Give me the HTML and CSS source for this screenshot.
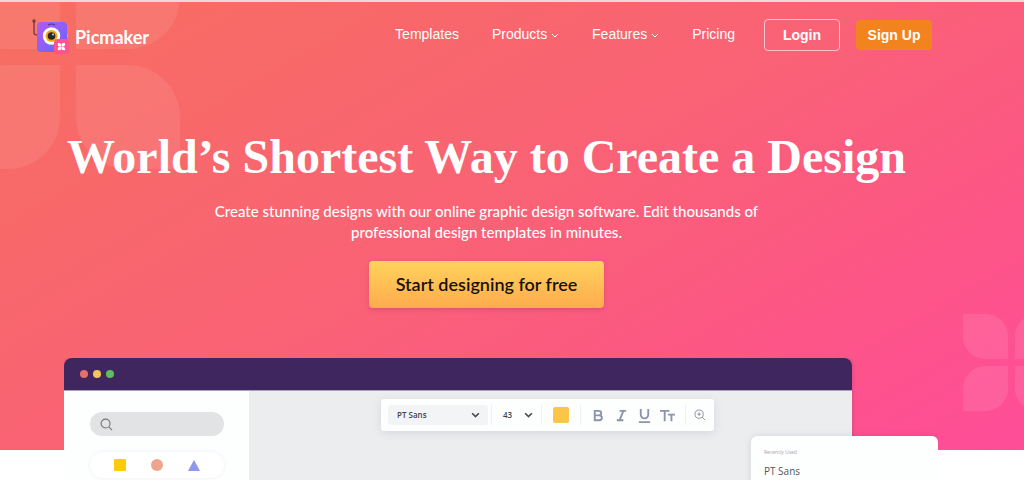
FILE: index.html
```html
<!DOCTYPE html>
<html lang="en">
<head>
<meta charset="utf-8">
<meta name="viewport" content="width=device-width, initial-scale=1">
<title>Picmaker</title>
<link rel="stylesheet" href="styles.css">
</head>
<body>
<svg class="defs" aria-hidden="true">
  <symbol id="flower" viewBox="0 0 224 224">
    <path d="M0 0H52A52 52 0 0 1 104 52V104H52A52 52 0 0 1 0 52Z"/>
    <path d="M224 0H172A52 52 0 0 0 120 52V104H172A52 52 0 0 0 224 52Z"/>
    <path d="M0 224H52A52 52 0 0 0 104 172V120H52A52 52 0 0 0 0 172Z"/>
    <path d="M224 224H172A52 52 0 0 1 120 172V120H172A52 52 0 0 1 224 172Z"/>
  </symbol>
</svg>
<div class="hero">
  <svg class="flower flower-large" aria-hidden="true"><use href="#flower"/></svg>
  <svg class="flower flower-small" aria-hidden="true"><use href="#flower"/></svg>
  <header class="topbar">
    <a class="brand" href="#">
      <svg class="brand-mark" viewBox="0 0 38 36" aria-hidden="true">
        <defs><linearGradient id="body" x2="1" y2="1"><stop stop-color="#b05cf0"/><stop offset="1" stop-color="#6a62ff"/></linearGradient></defs>
        <path d="M2 4v11q0 2 4 2" fill="none" stroke="#7b3a42" stroke-width="1.4"/>
        <circle cx="2" cy="3" r="1.7" fill="#7b3a42"/>
        <rect x="33" y="15" width="3" height="5" rx="1.5" fill="#f0a33c"/>
        <rect x="5" y="4" width="30" height="30" rx="4" fill="url(#body)"/>
        <path d="M16 7q3.500-2 7 0" fill="none" stroke="#49358e" stroke-width="1.2"/>
        <circle cx="19.500" cy="18" r="8.700" fill="#fff"/>
        <circle cx="19.500" cy="18" r="6" fill="#f5a90f"/>
        <circle cx="19.500" cy="18" r="3.800" fill="#292633"/>
        <circle cx="21" cy="16.500" r="1" fill="#ddd"/>
        <rect x="22" y="21" width="15" height="15" rx="4" fill="#fb548e"/>
        <svg x="25.500" y="25" width="7.500" height="7.500" fill="#fff"><use href="#flower"/></svg>
      </svg>
      <span>Picmaker</span>
    </a>
    <nav class="menu">
      <a href="#">Templates</a>
      <a href="#">Products <svg class="caret" viewBox="0 0 8 6" aria-hidden="true"><path d="M1 1l3 3 3-3"/></svg></a>
      <a href="#">Features <svg class="caret" viewBox="0 0 8 6" aria-hidden="true"><path d="M1 1l3 3 3-3"/></svg></a>
      <a href="#">Pricing</a>
    </nav>
    <a class="btn btn-login" href="#">Login</a>
    <a class="btn btn-signup" href="#">Sign Up</a>
  </header>
  <section class="pitch">
    <h1>World’s Shortest Way to Create a Design</h1>
    <p>Create stunning designs with our online graphic design software. Edit thousands of professional design templates in minutes.</p>
    <button class="cta" type="button">Start designing for free</button>
  </section>
</div>
<main class="showcase">
  <div class="window">
    <div class="titlebar"><i class="dot red"></i><i class="dot yellow"></i><i class="dot green"></i></div>
    <div class="workspace">
      <aside class="side">
        <label class="search">
          <svg viewBox="0 0 14 14" aria-hidden="true"><circle cx="6" cy="6" r="4.800"/><path d="M9.500 9.500L13 13"/></svg>
          <input type="search" aria-label="Search">
        </label>
        <div class="shapes">
          <svg viewBox="0 0 12 12"><rect width="12" height="12" rx="1" fill="#ffcb05"/></svg>
          <svg viewBox="0 0 12 12"><circle cx="6" cy="6" r="6" fill="#eda58b"/></svg>
          <svg viewBox="0 0 12 12"><path d="M6 1l6 11H0z" fill="#8f98ee"/></svg>
        </div>
      </aside>
      <div class="canvas">
        <div class="toolbar">
          <button class="picker font-picker" type="button">PT Sans <svg class="chevron" viewBox="0 0 8 6" aria-hidden="true"><path d="M1 1l3 3 3-3"/></svg></button>
          <button class="picker size-picker" type="button">43 <svg class="chevron" viewBox="0 0 8 6" aria-hidden="true"><path d="M1 1l3 3 3-3"/></svg></button>
          <button class="cell color" type="button" aria-label="Color"><i class="swatch"></i></button>
          <div class="cell styles">
            <button type="button" aria-label="Bold"><svg viewBox="0 0 16 16"><path d="M4 3h4.500a2.300 2.300 0 0 1 0 4.800H4zM4 7.800h5a2.600 2.600 0 0 1 0 5.200H4z"/></svg></button>
            <button type="button" aria-label="Italic"><svg viewBox="0 0 16 16"><path d="M6 3h7M3 13h7M10 3L6 13"/></svg></button>
            <button type="button" aria-label="Underline"><svg viewBox="0 0 16 16"><path d="M4 1v6a4 4 0 0 0 8 0V1M2 15h12"/></svg></button>
            <button type="button" aria-label="Text case"><svg viewBox="0 0 16 16"><path d="M0 3h10M5 3v11M8.500 7H16M12.200 7v7"/></svg></button>
          </div>
          <button class="cell zoom" type="button" aria-label="Zoom in"><svg viewBox="0 0 14 14"><circle cx="6" cy="6" r="4.800"/><path d="M9.500 9.500L13 13M6 4v4M4 6h4"/></svg></button>
        </div>
      </div>
    </div>
  </div>
  <div class="fonts">
    <small>Recently Used</small>
    <span>PT Sans</span>
  </div>
</main>
</body>
</html>
```
FILE: styles.css
```css
* { box-sizing: border-box; }
body {
  margin: 0;
  background: #fff;
  color: #fff;
  font-family: Lato, sans-serif;
}
a { color: inherit; text-decoration: none; }
button { border: 0; padding: 0; background: none; font-family: inherit; }
.defs { position: absolute; width: 0; height: 0; }

.hero {
  position: relative;
  overflow: hidden;
  border-top: 2px solid #eed9d5;
  padding-bottom: 142px;
  background: linear-gradient(150deg, #f76e60 0%, #f96374 45%, #fc5784 72%, #ff4d99 100%);
}
.flower { position: absolute; fill: #fff; }
.flower-large { left: -44px; top: -57px; width: 224px; height: 224px; opacity: 0.08; }
.flower-small { right: -36px; bottom: 39px; width: 97px; height: 97px; opacity: 0.09; }

.topbar {
  position: relative;
  display: flex;
  align-items: center;
  padding: 13px 92px 0 32px;
  font-family: "Liberation Sans", Arial, sans-serif;
  font-size: 14px;
}
.brand {
  display: flex;
  align-items: center;
  gap: 5px;
  margin-right: auto;
  padding-top: 3px;
  font: bold 18px/24px Lato, sans-serif;
}
.brand span { padding-top: 2px; }
.brand-mark { width: 38px; height: 36px; }
.menu { display: flex; gap: 33px; margin-right: 29px; line-height: 18px; }
.menu a { padding-bottom: 2px; }
.caret { width: 8px; height: 6px; fill: none; stroke: #fff; }
.btn {
  width: 76px;
  border-radius: 4px;
  font-weight: bold;
  line-height: 30px;
  text-align: center;
}
.btn-login { border: 1px solid #ffc3d2; margin-right: 16px; }
.btn-signup { background: #f3831f; }

.pitch {
  position: relative;
  display: flex;
  flex-direction: column;
  align-items: center;
  padding: 73px 51px 0 0;
  text-align: center;
}
h1 {
  margin: 0;
  font: bold 48px/60px "Liberation Serif", serif;
}
.pitch p {
  max-width: 560px;
  margin: 14px 0 18px;
  font-size: 15px;
  font-weight: 500;
  line-height: 21px;
}
.cta {
  padding: 0 27px;
  border-radius: 4px;
  background: linear-gradient(#ffd35d, #ffab4d);
  box-shadow: 0 2px 4px #a0285040;
  color: #17130c;
  font-size: 18px;
  font-weight: 600;
  line-height: 47px;
}

.showcase {
  position: relative;
  margin: -92px 86px 0 64px;
  overflow: hidden;
}
.window {
  margin-right: 86px;
  border-radius: 8px 8px 0 0;
  overflow: hidden;
  box-shadow: 0 0 4px #40204040;
}
.titlebar {
  display: flex;
  align-items: center;
  gap: 5px;
  height: 32px;
  padding-left: 16px;
  background: #3f265f;
}
.dot { width: 8px; height: 8px; border-radius: 50%; }
.red { background: #e8706a; }
.yellow { background: #f3c65a; }
.green { background: #5cbf5c; }
.workspace {
  display: flex;
  border-top: 1px solid #aaa0bc;
  background: #ecedef;
}
.side {
  width: 185px;
  padding: 21px 25px 0 26px;
  background: #fdfefe;
}
.search {
  display: flex;
  align-items: center;
  gap: 8px;
  height: 24px;
  padding: 0 10px;
  border-radius: 12px;
  background: #e2e3e5;
}
.search svg { width: 13px; height: 13px; fill: none; stroke: #77777c; stroke-width: 1.2; }
.search input { flex: 1; min-width: 0; border: 0; outline: 0; background: none; }
.shapes {
  display: flex;
  align-items: center;
  justify-content: space-around;
  height: 26px;
  margin: 16px 0 3px;
  padding: 0 12px;
  border-radius: 13px;
  background: #fff;
  box-shadow: 0 0 4px #eff0f8;
}
.shapes svg { width: 12px; height: 12px; }
.canvas { flex: 1; padding: 8px 138px 0 132px; }
.toolbar {
  display: flex;
  align-items: center;
  height: 32px;
  padding: 4px 0 4px 7px;
  border-radius: 3px;
  background: #fdfefe;
  box-shadow: 0 2px 8px #d4d6dc;
}
.picker {
  display: flex;
  align-items: center;
  justify-content: space-between;
  height: 20px;
  color: #45464c;
  font: 600 8px/20px "Open Sans", sans-serif;
}
.chevron { width: 9px; height: 7px; fill: none; stroke: #4a4b52; stroke-width: 1.5; }
.font-picker { width: 100px; padding: 0 8px 0 9px; border-radius: 3px; background: #f3f4f6; }
.size-picker { width: 51px; margin-left: 3px; padding: 0 8px 0 11px; border-left: 1px solid #eff0f3; border-right: 1px solid #eff0f3; }
.cell { display: flex; align-items: center; justify-content: center; height: 20px; }
.color { width: 38px; }
.swatch { width: 16px; height: 16px; border-radius: 2px; background: #fbc647; }
.styles { flex: 1; justify-content: space-around; padding: 0 6px; border-left: 1px solid #eff0f3; border-right: 1px solid #eff0f3; }
.styles button { height: 16px; }
.styles svg { display: block; width: 15px; height: 15px; fill: none; stroke: #8c93ab; stroke-width: 2; }
.zoom { width: 28px; }
.zoom svg { width: 12px; height: 12px; fill: none; stroke: #85858f; }

.fonts {
  position: absolute;
  right: 0;
  top: 78px;
  width: 187px;
  height: 60px;
  padding: 12px 13px 0;
  border-radius: 6px;
  background: #fdfefe;
  box-shadow: 0 0 6px #30304020;
  font-family: "Open Sans", sans-serif;
}
.fonts small { display: block; color: #a5a5aa; font-size: 5px; line-height: 8px; }
.fonts span { display: block; margin-top: 8px; color: #55565c; font-size: 10px; line-height: 14px; }
```
